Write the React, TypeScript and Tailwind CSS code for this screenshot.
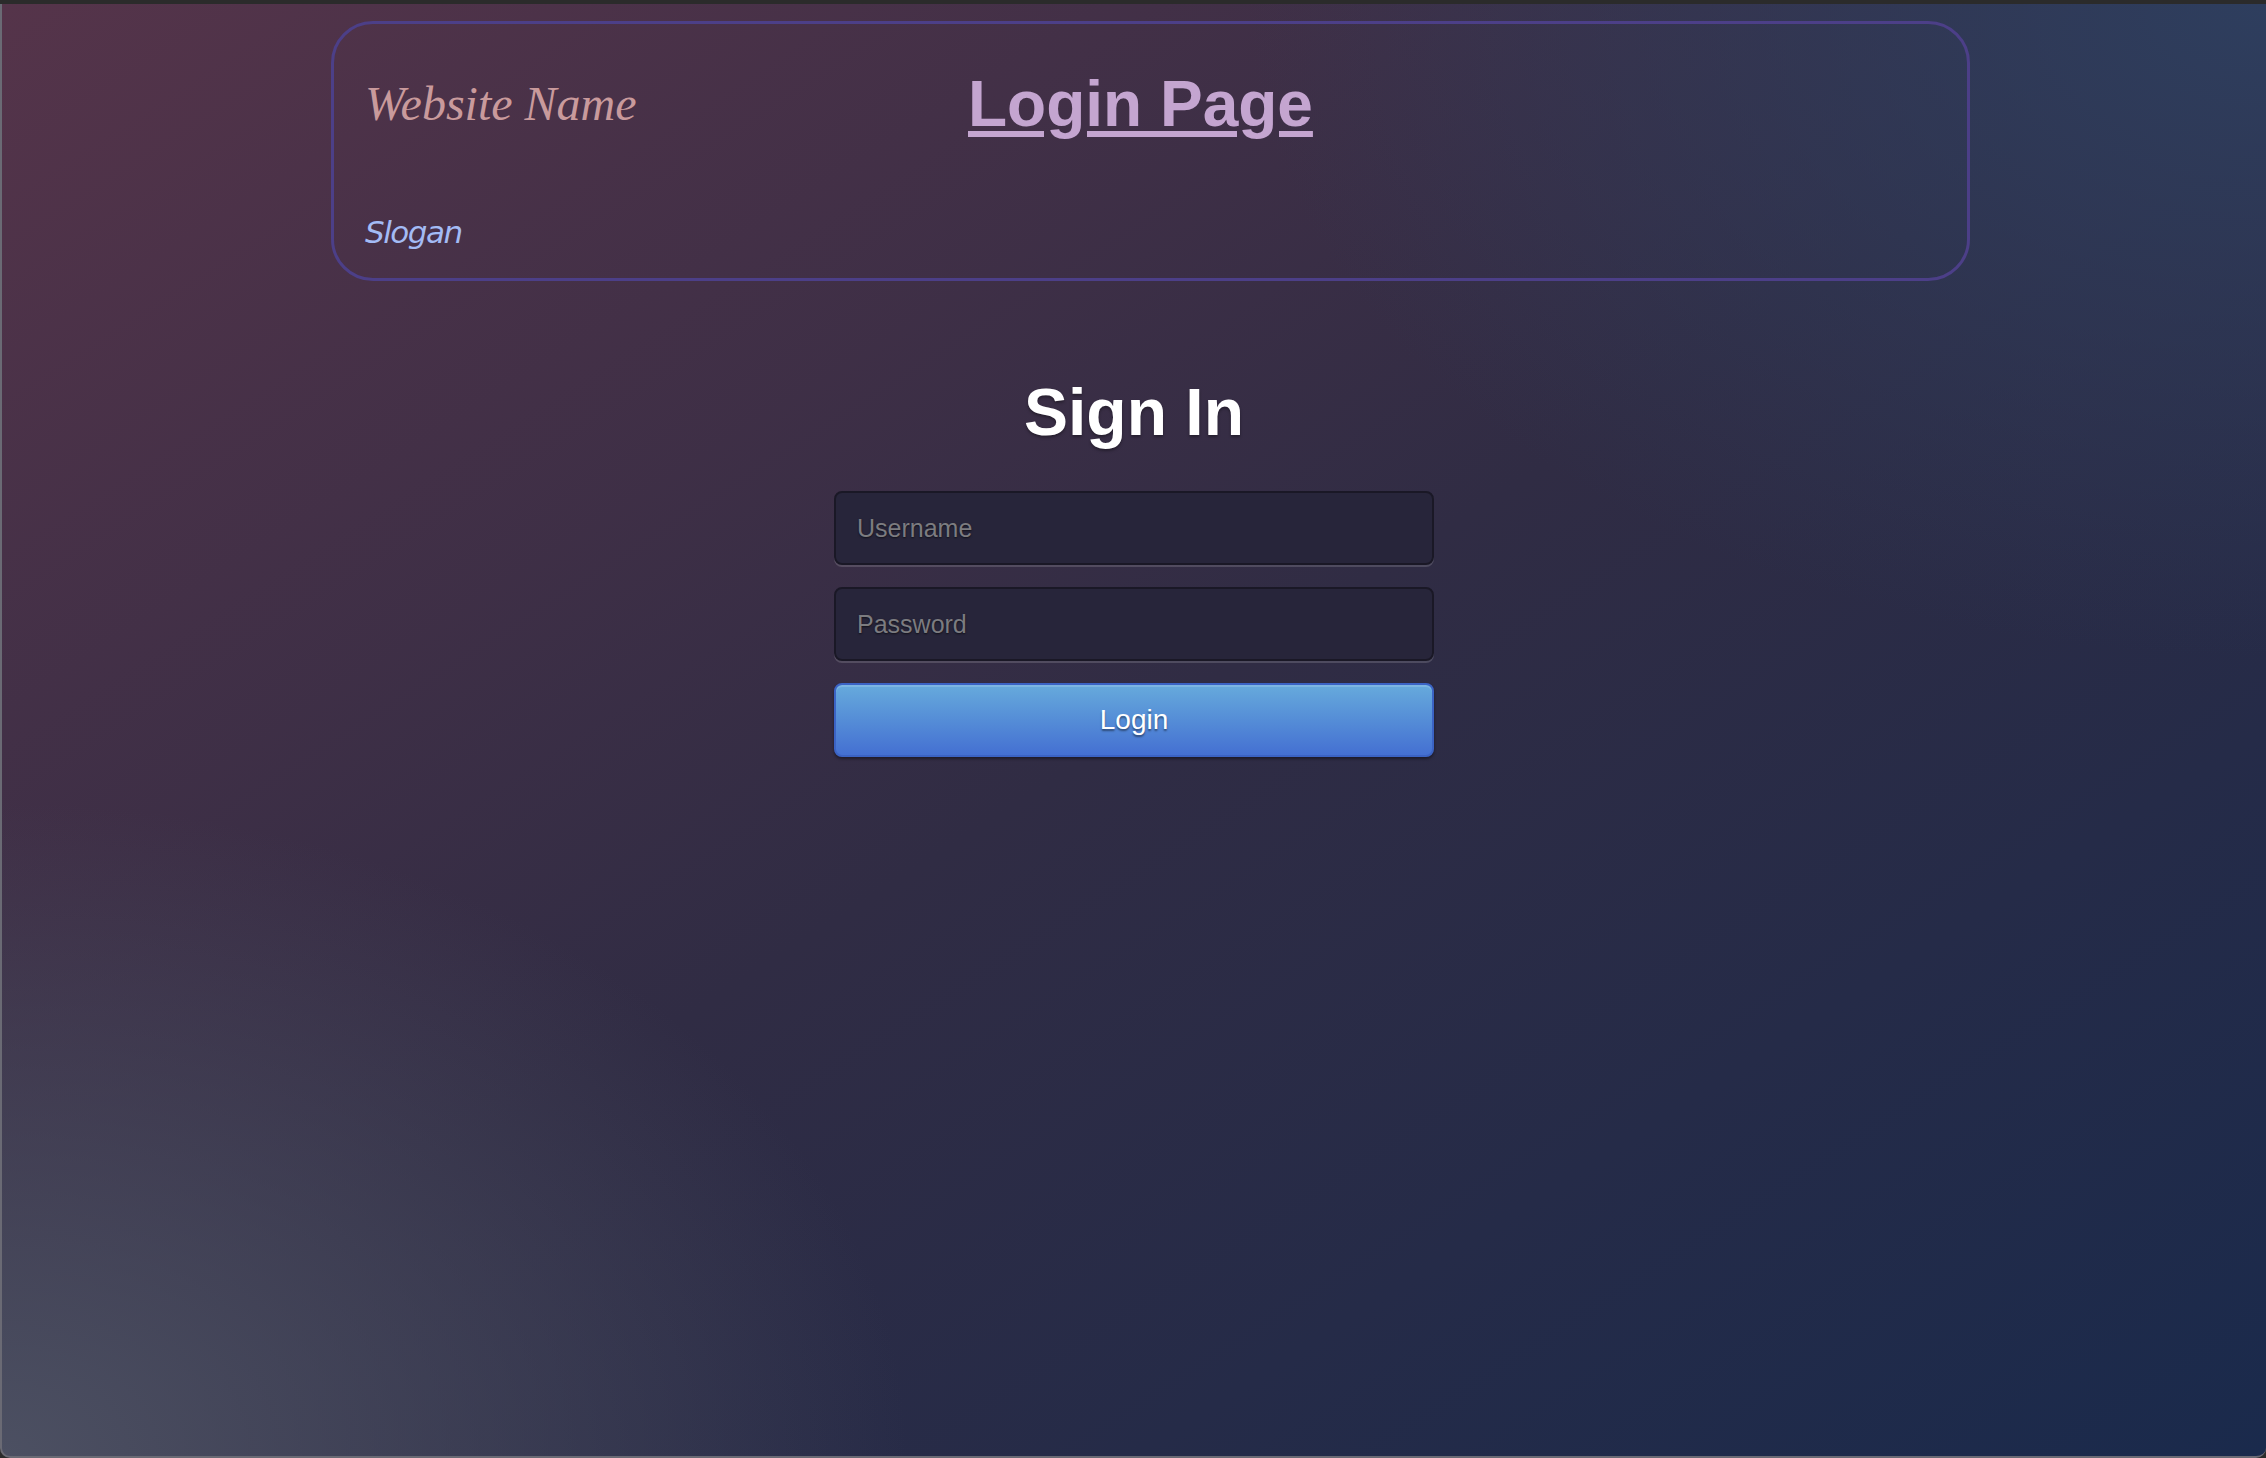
import { useState } from 'react';

export default function App() {
  const [username, setUsername] = useState('');
  const [password, setPassword] = useState('');

  return (
    <div className="h-screen w-full overflow-hidden bg-[#2b2b2b] pt-[4px]">
      <div className="h-full w-full rounded-b-[10px] border-l-2 border-b-2 border-[#6a6a74] bg-[radial-gradient(ellipse_40%_45%_at_0%_100%,rgba(76,80,98,1)_0%,rgba(76,80,98,0)_100%),radial-gradient(ellipse_45%_45%_at_100%_0%,rgba(46,62,94,1)_0%,rgba(46,62,94,0)_100%),linear-gradient(to_bottom_right,#55344a_0%,#302c44_50%,#1a2a4c_100%)]">
        {/* header */}
        <div className="pl-[329px] pr-[296px] pt-[17px]">
          <header className="h-[260px] rounded-[42px] border-[3px] border-[#4c3f88] pl-[31px] pt-[42px]">
            <div className="flex items-start">
              <div className="mt-[14px] w-[603px] shrink-0 text-[48px] italic leading-none text-[#c99a9c] [font-family:'Liberation_Serif',serif]">
                Website Name
              </div>
              <h1 className="mt-[6px] text-[64px] font-bold leading-none text-[#c4a5d0] underline decoration-[6px] underline-offset-[5px] [font-family:'Liberation_Sans',Arial,sans-serif]">
                Login Page
              </h1>
            </div>
            <p className="mt-[81px] text-[31px] italic leading-none tracking-[-1.5px] text-[#a3bbf5] [font-family:'DejaVu_Sans',sans-serif]">
              Slogan
            </p>
          </header>
        </div>

        {/* sign in */}
        <div className="mt-[98px] flex flex-col items-center">
          <h2 className="text-[66px] font-bold leading-none text-white [text-shadow:0_2px_3px_rgba(0,0,0,0.35)] [font-family:'Liberation_Sans',Arial,sans-serif]">
            Sign In
          </h2>
          <form
            className="mt-[46px] flex w-[600px] flex-col gap-[22px] [font-family:'Liberation_Sans',Arial,sans-serif]"
            onSubmit={(e) => e.preventDefault()}
          >
            <input
              type="text"
              value={username}
              onChange={(e) => setUsername(e.target.value)}
              placeholder="Username"
              className="h-[74px] w-full rounded-[8px] border-2 border-[#1a1826] bg-[#27253a] px-[21px] text-[25px] text-white shadow-[0_2px_0_rgba(255,255,255,0.15)] outline-none placeholder:text-[#7c7c80] [text-shadow:0_1px_2px_rgba(0,0,0,0.6)]"
            />
            <input
              type="password"
              value={password}
              onChange={(e) => setPassword(e.target.value)}
              placeholder="Password"
              className="h-[74px] w-full rounded-[8px] border-2 border-[#1a1826] bg-[#27253a] px-[21px] text-[25px] text-white shadow-[0_2px_0_rgba(255,255,255,0.15)] outline-none placeholder:text-[#7c7c80] [text-shadow:0_1px_2px_rgba(0,0,0,0.6)]"
            />
            <button
              type="submit"
              className="h-[74px] w-full rounded-[8px] border-2 border-[#3b63c4] bg-[linear-gradient(to_bottom,#66aadc,#4470d2)] text-[28px] text-white shadow-[inset_0_2px_0_rgba(140,190,230,0.6),0_2px_3px_rgba(0,0,0,0.4)] [text-shadow:0_2px_2px_rgba(0,0,0,0.45)]"
            >
              Login
            </button>
          </form>
        </div>
      </div>
    </div>
  );
}
